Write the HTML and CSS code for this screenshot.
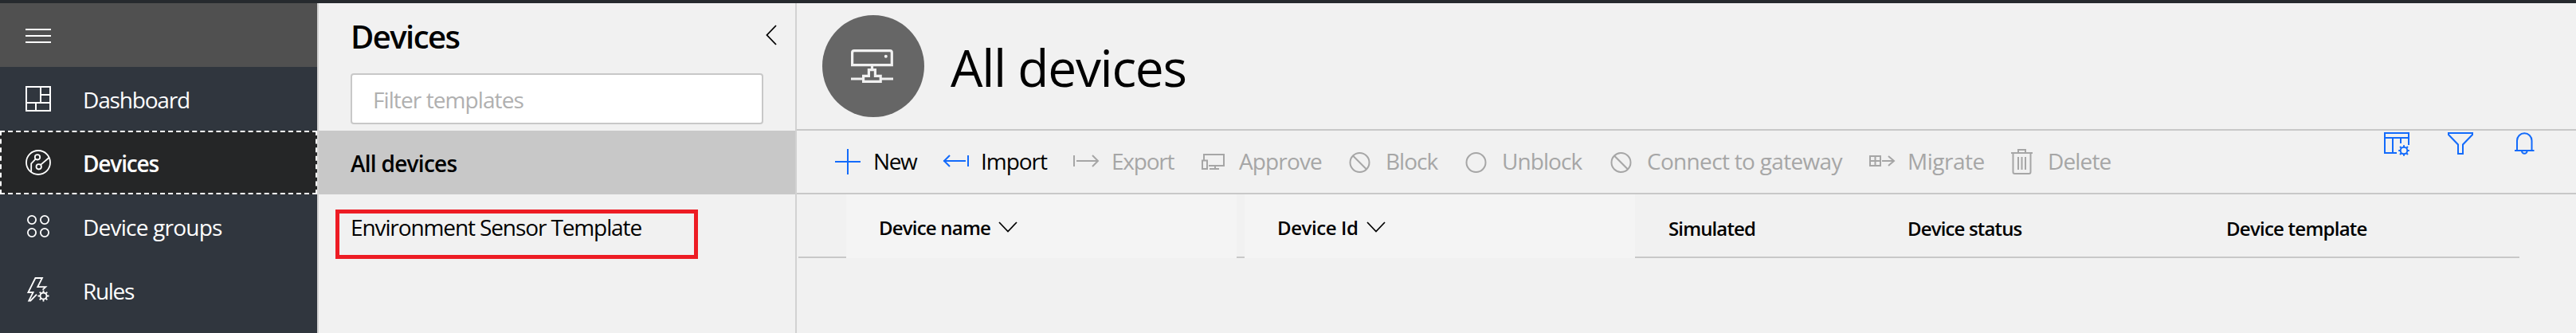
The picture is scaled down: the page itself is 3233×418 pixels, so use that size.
FILE: index.html
```html
<!DOCTYPE html>
<html lang="en">
<head>
<meta charset="utf-8">
<title>All devices</title>
<link rel="stylesheet" href="styles.css">
</head>
<body>
<div class="topbar"></div>
<div class="app">
  <nav class="sidebar">
    <div class="nav-toggle">
      <svg class="icon" viewBox="0 0 32 32"><path d="M0 9h32M0 17h32M0 25h32"/></svg>
    </div>
    <a class="nav-item">
      <svg class="icon" viewBox="0 0 32 32"><path d="M1 1h30v30H1zM19 1v20M19 11h12M1 21h30M13 21v10"/></svg>
      <span class="t-dashboard">Dashboard</span>
    </a>
    <a class="nav-item active">
      <svg class="icon thin" viewBox="0 0 32 32"><circle cx="16" cy="16" r="15"/><circle cx="15" cy="9.3" r="3.2"/><circle cx="16.7" cy="21.3" r="3.2"/><path d="M12.6 11.7L7.2 17.3V28M19 18.9L29.4 10"/></svg>
      <span class="t-devices">Devices</span>
    </a>
    <a class="nav-item">
      <svg class="icon thin" viewBox="0 0 32 32"><circle cx="8" cy="8" r="5.1"/><circle cx="24" cy="8" r="5.1"/><circle cx="8" cy="24" r="5.1"/><circle cx="24" cy="24" r="5.1"/></svg>
      <span class="t-groups">Device groups</span>
    </a>
    <a class="nav-item">
      <svg class="icon thin" viewBox="0 0 32 32"><path d="M14 21.7L6.3 29.5H4.2L9.6 19H3.4L12.4 1H21L15.3 12.2H25.3L21.6 15.6"/><circle cx="22.5" cy="23.5" r="4"/><path d="M22.5 19.5v-3M22.5 27.5v3M18.5 23.5h-3M26.5 23.5h3M19.7 20.7l-2-2M25.3 20.7l2-2M19.7 26.3l-2 2M25.3 26.3l2 2"/></svg>
      <span class="t-rules">Rules</span>
    </a>
  </nav>

  <aside class="panel">
    <div class="panel-head">
      <h2>Devices</h2>
      <svg class="collapse" viewBox="0 0 14 26"><path d="M13 1L1.5 13L13 25"/></svg>
    </div>
    <input class="filter" type="text" placeholder="Filter templates">
    <div class="template selected t-all">All devices</div>
    <div class="template t-env">Environment Sensor Template<span class="highlight"></span></div>
  </aside>

  <main class="content">
    <header class="page-head">
      <div class="badge">
        <svg viewBox="0 0 54 42"><path d="M1.6 19.7V4Q1.6 1.6 4 1.6H49Q51.3 1.6 51.3 4V19.7ZM26.5 20v5.7M22.4 33.3V25.7H30.4V33.3H37.2V40.3H15.6V33.3ZM0 37h15M38 37h15"/><circle cx="43.8" cy="8.8" r="2"/></svg>
      </div>
      <h1>All devices</h1>
    </header>

    <div class="toolbar">
      <div class="commands">
        <span class="cmd"><svg class="icon" viewBox="0 0 32 32"><path d="M0 16h32M16 0v32"/></svg><span class="t-new">New</span></span>
        <span class="cmd"><svg class="icon" viewBox="0 0 32 32"><path d="M1 15h28M9 8L2 15l7 7M32 8v14"/></svg><span class="t-import">Import</span></span>
        <span class="cmd off"><svg class="icon" viewBox="0 0 32 32"><path d="M1 8v14M4 15h27M24 8l7 7l-7 7"/></svg><span class="t-export">Export</span></span>
        <span class="cmd off"><svg class="icon" viewBox="0 0 32 32"><path d="M4 14V7H29V21H10M2 14.5h6V25H2zM18 21v4M11 25h12"/></svg><span class="t-approve">Approve</span></span>
        <span class="cmd off"><svg class="icon" viewBox="0 0 32 32"><circle cx="15.5" cy="17" r="12"/><path d="M7 8.5l17 17"/></svg><span class="t-block">Block</span></span>
        <span class="cmd off"><svg class="icon" viewBox="0 0 32 32"><circle cx="15.5" cy="17" r="12"/></svg><span class="t-unblock">Unblock</span></span>
        <span class="cmd off"><svg class="icon" viewBox="0 0 32 32"><circle cx="15.5" cy="17" r="12"/><path d="M7 8.5l17 17"/></svg><span class="t-connect">Connect to gateway</span></span>
        <span class="cmd off"><svg class="icon" viewBox="0 0 32 32"><path d="M1 9h13v12H1zM7.5 9v12M1 15h13M16 15h15M24 9l7 6l-7 6"/></svg><span class="t-migrate">Migrate</span></span>
        <span class="cmd off"><svg class="icon" viewBox="0 0 32 32"><path d="M2 5h27M11 5V1h9v4M4.500 5V29Q4.500 31 6.500 31H24.500Q26.500 31 26.500 29V5M11 10v16M15.500 10v16M20 10v16"/></svg><span class="t-delete">Delete</span></span>
      </div>
      <div class="tools">
        <svg class="icon" viewBox="0 0 32 32"><path d="M16 28H1V3H31V18M1 9h30M11 9v19M21 9v7"/><circle cx="25" cy="25" r="4.300"/><path d="M25 20.700v-2.500M25 29.300v2.500M20.700 25h-2.500M29.300 25h2.500M22 22l-2-2M28 22l2-2M22 28l-2 2M28 28l2 2"/></svg>
        <svg class="icon" viewBox="0 0 32 32"><path d="M1 3H31V5L19 17.500V29H13V17.500L1 5Z"/></svg>
        <svg class="icon" viewBox="0 0 32 32"><path d="M7 25V12.500a9.200 9.200 0 0 1 18.500 0V25M4 25H28.500M13 25.500a3.300 3.300 0 0 0 6.600 0"/></svg>
      </div>
    </div>

    <div class="grid-head">
      <div class="col lead"></div>
      <div class="col sortable"><span class="t-name">Device name</span><svg class="sort" viewBox="0 0 24 14"><path d="M1 1L12 12.500L23 1"/></svg></div>
      <div class="col"></div>
      <div class="col sortable"><span class="t-id">Device Id</span><svg class="sort" viewBox="0 0 24 14"><path d="M1 1L12 12.500L23 1"/></svg></div>
      <div class="col plain t-sim">Simulated</div>
      <div class="col plain t-status">Device status</div>
      <div class="col plain t-template">Device template</div>
    </div>
  </main>
</div>
</body>
</html>
```
FILE: styles.css
```css
* { box-sizing: border-box; }

body {
  margin: 0;
  height: 418px;
  overflow: hidden;
  background: #f1f1f1;
  color: #000;
  font: 400 28px "Open Sans", "Noto Sans", sans-serif;
  white-space: nowrap;
}

h1, h2 { margin: 0; }

svg {
  flex: none;
  fill: none;
  stroke: currentColor;
  stroke-width: 2;
  overflow: visible;
}

.icon { width: 32px; height: 32px; }
.thin { stroke-width: 1.8; }

.topbar { height: 4px; background: #262a2e; }
.app { display: flex; height: 414px; }

/* Sidebar */
.sidebar { flex: none; width: 398px; background: #30363e; color: #fff; }

.nav-toggle {
  height: 80px;
  padding: 24px 32px;
  background: #505050;
}

.nav-item {
  display: flex;
  gap: 40px;
  height: 80px;
  padding: 0 32px;
  line-height: 82px;
}

.nav-item .icon { margin-top: 24px; }

.nav-item.active {
  padding: 0 30px;
  border: 2px dashed #fff;
  background: #252627;
  font-weight: 600;
  line-height: 78px;
}

.nav-item.active .icon { margin-top: 22px; }

/* Template list */
.panel {
  flex: none;
  width: 602px;
  border: solid #d2d2d2;
  border-width: 0 2px;
}

.panel-head {
  display: flex;
  justify-content: space-between;
  height: 88px;
  padding: 0 23px 0 40px;
}

.panel-head h2 {
  font-size: 40px;
  font-weight: 600;
  line-height: 83px;
  letter-spacing: -1.55px;
}

.collapse { width: 14px; height: 26px; margin-top: 27px; stroke-width: 1.8; }

.filter {
  display: block;
  width: 518px;
  height: 64px;
  margin: 0 0 8px 40px;
  padding: 2px 26px 0;
  border: 2px solid #c8c8c8;
  border-radius: 4px;
  background: #fff;
  font: inherit;
  letter-spacing: -0.91px;
}

.filter::placeholder { color: #b0b0b0; opacity: 1; }

.template { position: relative; height: 80px; padding-left: 40px; line-height: 82px; }
.template.selected { background: #c8c8c8; font-weight: 600; }

.highlight {
  position: absolute;
  left: 21px;
  top: 19px;
  width: 455px;
  height: 62px;
  border: 5px solid #ed1c24;
}

/* Page header */
.content { flex: 1; }

.page-head {
  display: flex;
  gap: 33px;
  height: 160px;
  padding-left: 32px;
  border-bottom: 2px solid #c8c8c8;
}

.badge {
  flex: none;
  width: 128px;
  height: 128px;
  margin-top: 15px;
  padding: 43px 0 0 36px;
  border-radius: 50%;
  background: #666;
  color: #f1f1f1;
}

.badge svg { display: block; width: 54px; height: 42px; stroke-width: 3.2; }
.badge circle { fill: currentColor; stroke: none; }

.page-head h1 {
  font-size: 64px;
  font-weight: 400;
  line-height: 162px;
  letter-spacing: -1.27px;
}

/* Toolbar */
.toolbar {
  display: flex;
  justify-content: space-between;
  height: 80px;
  padding: 0 49px 0 48px;
  border-bottom: 2px solid #c8c8c8;
}

.commands {
  display: grid;
  grid-template-columns: 135px 164px 160px 184px 146px 182px 327px 176px 130px;
}

.cmd { display: flex; gap: 16px; height: 78px; line-height: 76px; }
.cmd .icon { margin-top: 23px; color: #136bfb; }
.cmd.off, .cmd.off .icon { color: #a6a6a6; }

.tools { display: flex; gap: 48px; color: #136bfb; }

/* Column headings */
.grid-head {
  display: grid;
  grid-template-columns: 60px 490px 10px 490px 300px 400px 410px;
  height: 80px;
  margin-left: 2px;
  font-size: 24px;
  font-weight: 600;
}

.col { height: 80px; border-bottom: 2px solid #c8c8c8; }

.col.sortable {
  display: flex;
  gap: 10px;
  padding-left: 41px;
  border-bottom: 0;
  background: #f4f4f4;
  line-height: 83px;
}

.sort { width: 24px; height: 14px; margin-top: 34px; stroke-width: 1.7; }
.col.plain { padding-left: 42px; line-height: 85px; }

/* Per-label tracking */
.t-dashboard { letter-spacing: -1.17px; }
.t-devices { letter-spacing: -1.16px; }
.t-groups { letter-spacing: -0.77px; }
.t-rules { letter-spacing: -1.31px; }
.t-all { letter-spacing: -0.73px; }
.t-env { letter-spacing: -1.11px; }
.t-new { letter-spacing: -1.4px; }
.t-import { letter-spacing: -1.03px; }
.t-export { letter-spacing: -1.23px; }
.t-approve { letter-spacing: -0.87px; }
.t-block { letter-spacing: -0.98px; }
.t-unblock { letter-spacing: -0.92px; }
.t-connect { letter-spacing: -0.68px; }
.t-migrate { letter-spacing: -0.49px; }
.t-delete { letter-spacing: -0.86px; }
.t-name { letter-spacing: -0.8px; }
.t-id { letter-spacing: -0.4px; }
.t-sim { letter-spacing: -0.87px; }
.t-status { letter-spacing: -0.85px; }
.t-template { letter-spacing: -0.76px; }
```
